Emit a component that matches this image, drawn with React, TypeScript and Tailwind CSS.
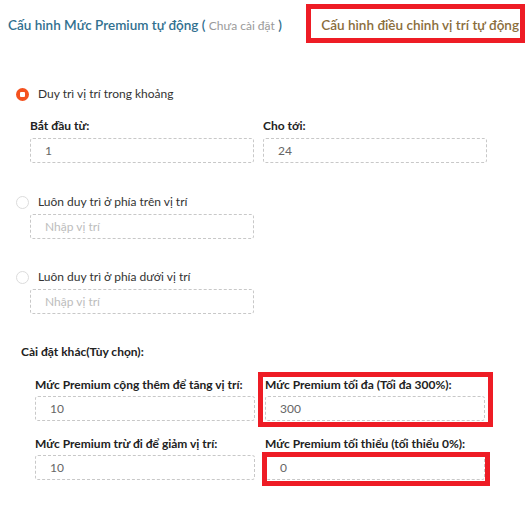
const Radio = ({ checked = false }: { checked?: boolean }) =>
  checked ? (
    <span className="flex h-[13px] w-[13px] items-center justify-center rounded-full bg-[#f4511e]">
      <span className="h-[5px] w-[5px] rounded-[1px] bg-white" />
    </span>
  ) : (
    <span className="h-[13px] w-[13px] rounded-full border border-[#dcdcdc] bg-white" />
  );

const Field = ({
  value,
  placeholder,
  w,
}: {
  value?: string;
  placeholder?: string;
  w: string;
}) => (
  <div
    className={`flex h-[25px] items-center rounded-[3px] border border-dashed border-[#c8c8c8] pl-[14px] text-[12px] ${w} ${
      value ? "text-[#666]" : "text-[#bdbdbd]"
    }`}
  >
    {value ?? placeholder}
  </div>
);

const Label = ({ children }: { children: React.ReactNode }) => (
  <div className="flex h-4 items-center whitespace-nowrap text-[12px] font-bold text-[#222]">{children}</div>
);

const RadioRow = ({ checked, text }: { checked?: boolean; text: string }) => (
  <div className="flex h-4 items-center gap-[9px] pl-4 text-[12px] text-[#333]">
    <Radio checked={checked} />
    <span>{text}</span>
  </div>
);

export default function App() {
  return (
    <div className="relative h-[519px] w-[525px] overflow-hidden bg-white font-['Lato',sans-serif]">
      <div className="flex h-[51px] items-center whitespace-nowrap pl-2 pr-[6px]">
        <div className="text-[13.5px] font-semibold text-[#31708f]">
          Cấu hình Mức Premium tự động ({" "}
          <span className="text-[12px] font-normal text-[#9a9a9a]">Chưa cài đặt</span> )
        </div>
        <div className="ml-auto text-[13.5px] font-semibold text-[#8a6d3b]">Cấu hình điều chỉnh vị trí tự động</div>
      </div>

      <div className="mt-[35px]">
        <RadioRow checked text="Duy trì vị trí trong khoảng" />
        <div className="mt-4 grid grid-cols-[224px_224px] gap-x-[9px] pl-[30px]">
          <Label>Bắt đầu từ:</Label>
          <Label>Cho tới:</Label>
          <div className="mt-1">
            <Field value="1" w="w-[224px]" />
          </div>
          <div className="mt-1">
            <Field value="24" w="w-[224px]" />
          </div>
        </div>

        <div className="mt-[31px]">
          <RadioRow text="Luôn duy trì ở phía trên vị trí" />
          <div className="mt-1 pl-[30px]">
            <Field placeholder="Nhập vị trí" w="w-[224px]" />
          </div>
        </div>

        <div className="mt-[30px]">
          <RadioRow text="Luôn duy trì ở phía dưới vị trí" />
          <div className="mt-1 pl-[30px]">
            <Field placeholder="Nhập vị trí" w="w-[224px]" />
          </div>
        </div>

        <div className="mt-[30px] pl-[21px]">
          <Label>Cài đặt khác(Tùy chọn):</Label>
        </div>

        <div className="mt-[17px] grid grid-cols-[220px_220px] gap-x-[10px] pl-[35px]">
          <Label>Mức Premium cộng thêm để tăng vị trí:</Label>
          <Label>Mức Premium tối đa (Tối đa 300%):</Label>
          <div className="mt-[3px]">
            <Field value="10" w="w-[220px]" />
          </div>
          <div className="mt-[3px]">
            <Field value="300" w="w-[220px]" />
          </div>
          <div className="mt-[15px]">
            <Label>Mức Premium trừ đi để giảm vị trí:</Label>
          </div>
          <div className="mt-[15px]">
            <Label>Mức Premium tối thiểu (tối thiểu 0%):</Label>
          </div>
          <div className="mt-[3px]">
            <Field value="10" w="w-[220px]" />
          </div>
          <div className="mt-[3px]">
            <Field value="0" w="w-[220px]" />
          </div>
        </div>
      </div>

      {/* annotation boxes */}
      <div className="pointer-events-none absolute left-[306px] top-[4px] h-[39px] w-[219px] border-[5px] border-[#ee1c25]" />
      <div className="pointer-events-none absolute left-[258px] top-[372px] h-[55px] w-[235px] border-[5px] border-[#ee1c25]" />
      <div className="pointer-events-none absolute left-[262px] top-[452px] h-[34px] w-[228px] border-[5px] border-[#ee1c25]" />
    </div>
  );
}
